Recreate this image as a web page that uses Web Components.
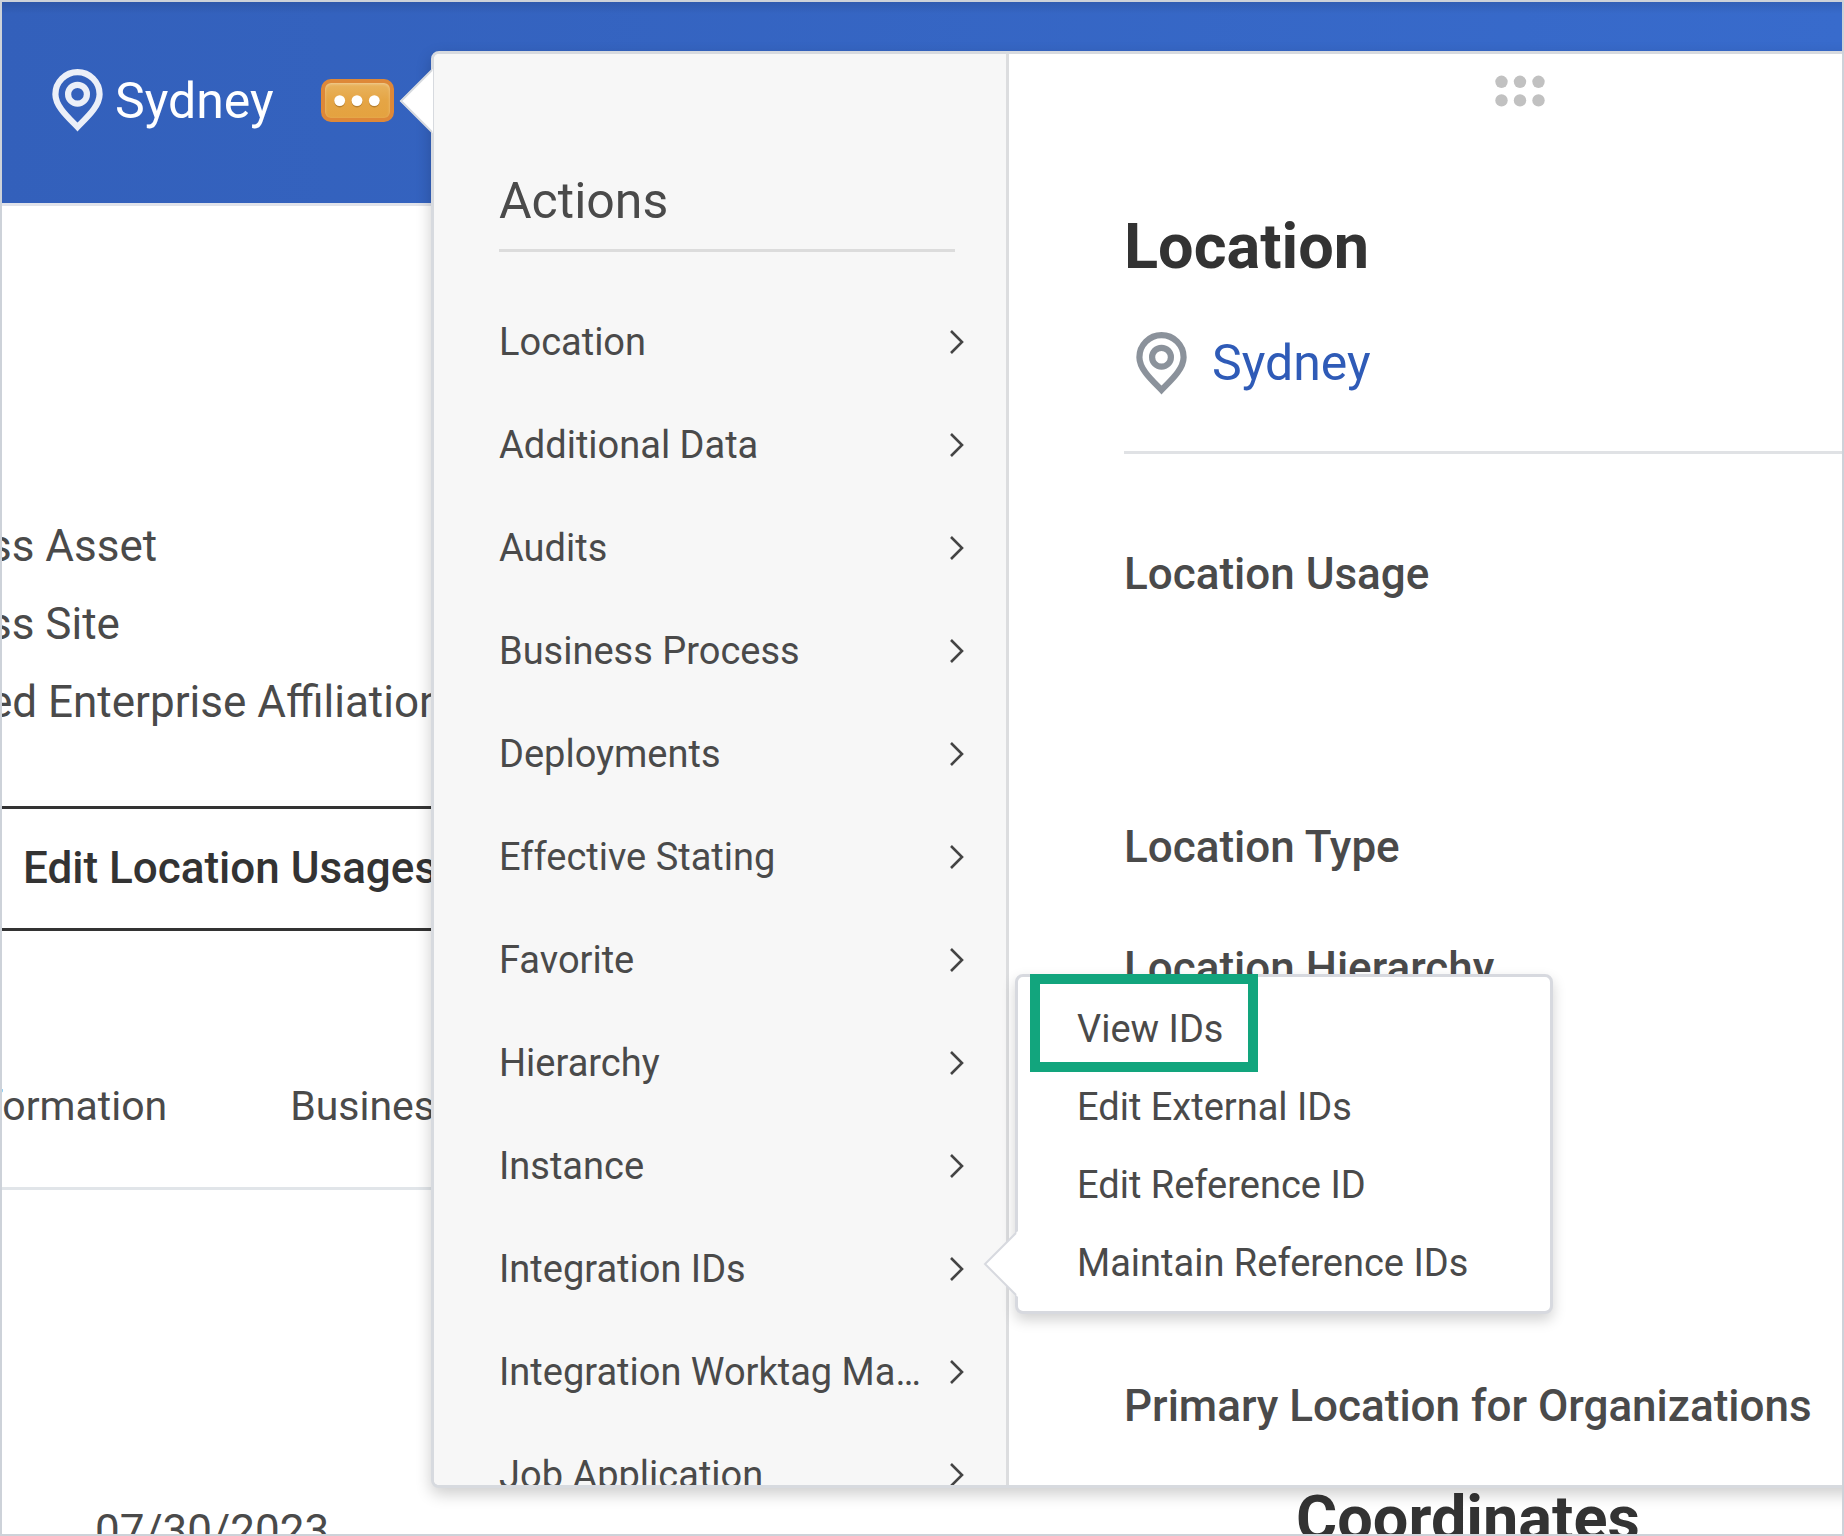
<!DOCTYPE html>
<html lang="en">
<head>
<meta charset="utf-8">
<title>Sydney - Location</title>
<style>
  html, body { margin: 0; height: 100%; }
  body { font-family: Roboto, "Liberation Sans", sans-serif; color: #4a4a4a; background: #fff; }
</style>
</head>
<body>
<app-frame>
  <page-header slot="header" name="Sydney"></page-header>
  <page-body slot="body"></page-body>
  <related-panel slot="overlay">
    <actions-menu slot="menu"></actions-menu>
    <location-card slot="card"></location-card>
  </related-panel>
  <sub-menu slot="overlay">
    <sub-item marked>View IDs</sub-item>
    <sub-item>Edit External IDs</sub-item>
    <sub-item>Edit Reference ID</sub-item>
    <sub-item>Maintain Reference IDs</sub-item>
  </sub-menu>
</app-frame>
<script>
const define = (name, html) => customElements.define(name, class extends HTMLElement {
  constructor() {
    super();
    this.attachShadow({ mode: 'open' }).innerHTML =
      '<style>*{box-sizing:border-box}button{font:inherit;color:inherit;background:none;border:0;padding:0;margin:0;text-align:left;cursor:pointer}ul{list-style:none;margin:0;padding:0}h1,h2,p{margin:0}svg{display:block}</style>' +
      (typeof html === 'function' ? html(this) : html);
  }
});

define('pin-icon', `
<style>:host{display:block;flex:none}</style>
<svg width="51" height="63" viewBox="0 0 51 63" fill="none" stroke="currentColor" stroke-width="6.2" aria-hidden="true">
  <path d="M25.5 58C18 50 3.4 38 3.4 25.2A22.1 22.1 0 0 1 47.6 25.2C47.6 38 33 50 25.5 58Z"/>
  <circle cx="25.5" cy="25.2" r="9.4"/>
</svg>`);

define('app-frame', `
<style>
:host{display:block;position:relative;box-sizing:border-box;height:100vh;overflow:hidden;border:2px solid #cdd2d9}
</style>
<slot name="header"></slot><slot name="body"></slot><slot name="overlay"></slot>`);

define('page-header', el => `
<style>
:host{display:flex;align-items:center;box-sizing:border-box;height:204px;padding:0 50px 4px;color:#fff;
  border-bottom:3px solid #e1e3ea;
  background:linear-gradient(rgba(0,0,0,.1),transparent 12px),linear-gradient(90deg,#3360bb,#386bcc)}
pin-icon{color:#ebeff8}
h1{font-size:50px;line-height:60px;font-weight:400;margin:0 47px 0 12px}
button{display:grid;place-items:center;width:73px;height:43px;border:4px solid #de8838;border-radius:10px;
  background:linear-gradient(#e9b45f,#e5a545 50%,#e4a23f);box-shadow:inset 0 1px 3px rgba(255,255,255,.35)}
</style>
<pin-icon></pin-icon>
<h1>${el.getAttribute('name')}</h1>
<button aria-label="Related Actions">
  <svg width="48" height="16" viewBox="0 0 48 16">
    <g fill="#b8802f"><circle cx="6.7" cy="9" r="5.4"/><circle cx="24" cy="9" r="5.4"/><circle cx="41.3" cy="9" r="5.4"/></g>
    <g fill="#fff"><circle cx="6.7" cy="7.6" r="5.4"/><circle cx="24" cy="7.6" r="5.4"/><circle cx="41.3" cy="7.6" r="5.4"/></g>
  </svg>
</button>`);

define('page-body', `
<style>
:host{display:block;white-space:nowrap}
.usages{margin:301px 0 65px -13px;font-size:44px;line-height:78px}
.edit{display:block;width:100%;height:125px;padding:0 0 2px 21px;border:solid #333;border-width:3px 0;
  font-size:44px;font-weight:500;color:#333}
nav{display:flex;gap:123px;margin:151px 0 293px;padding:0 0 57px;border-bottom:3px solid #e1e5e9;font-size:41px;line-height:48px}
nav button:first-child{margin-left:-14px}
.row{display:grid;grid-template-columns:11fr 5fr;align-items:end;padding-left:93px}
.row p{font-size:44px;line-height:48px}
h2{font-size:63px;line-height:72px;font-weight:700;color:#333}
</style>
<ul class="usages"><li>ss Asset</li><li>ss Site</li><li>ed Enterprise Affiliation</li></ul>
<button class="edit">Edit Location Usages</button>
<nav><button>formation</button><button>Business</button></nav>
<div class="row"><p>07/30/2023</p><h2>Coordinates</h2></div>`);

define('related-panel', `
<style>
:host{display:block;position:absolute;left:429px;top:49px;right:-192px;bottom:46px}
.box{display:grid;grid-template-columns:575px 1fr;box-sizing:border-box;height:100%;overflow:hidden;background:#fff;
  border:3px solid #d7dadf;border-radius:8px;box-shadow:0 6px 16px rgba(0,0,0,.2)}
svg{position:absolute;left:-32px;top:18px}
</style>
<div class="box"><slot name="menu"></slot><slot name="card"></slot></div>
<svg width="34" height="64" viewBox="0 0 34 64"><path d="M34 0V64L1 32Z" fill="#fff"/><path d="M33 1L2 32L33 63" fill="none" stroke="#d7dadf" stroke-width="2"/></svg>`);

define('menu-row', `
<style>
:host{display:block}
button{display:flex;align-items:center;justify-content:space-between;width:100%;height:103px;font-size:38px;line-height:48px}
span{white-space:nowrap;overflow:hidden}
svg{flex:none}
</style>
<button><span><slot></slot></span>
<svg width="15" height="26" viewBox="0 0 15 26" fill="none" stroke="#444" stroke-width="2.6"><path d="M2 2L13 13L2 24"/></svg></button>`);

const actions = ['Location', 'Additional Data', 'Audits', 'Business Process', 'Deployments', 'Effective Stating',
  'Favorite', 'Hierarchy', 'Instance', 'Integration IDs', 'Integration Worktag Ma…', 'Job Application'];

define('actions-menu', `
<style>
:host{display:block;box-sizing:border-box;min-height:0;padding:117px 42px 0 65px;background:#f7f7f7;border-right:3px solid #dcdddf}
h2{font-size:50px;line-height:60px;font-weight:400;margin:0 9px 38px 0;padding-bottom:18px;border-bottom:3px solid #dcdcdc}
</style>
<h2>Actions</h2>
<nav>${actions.map(a => `<menu-row>${a}</menu-row>`).join('')}</nav>`);

define('location-card', `
<style>
:host{display:block;min-height:0;padding-top:21px;white-space:nowrap}
.grip{margin:0 auto 104px}
.content{padding-left:115px}
h2{font-size:63px;line-height:72px;font-weight:700;color:#333}
.who{display:flex;align-items:center;gap:25px;margin-top:48px;padding:0 0 56px 12px;border-bottom:3px solid #e0e2e5}
pin-icon{color:#8b929b}
a{font-size:50px;line-height:64px;color:#2f5bb7;text-decoration:none}
.fields{font-size:44px;line-height:50px;font-weight:500}
.fields p{margin-top:71px}
.fields p:first-child{margin-top:95px;padding-bottom:152px}
.fields p:last-child{margin-top:388px}
</style>
<svg class="grip" width="50" height="32" viewBox="0 0 50 32" fill="#c1c1c1">
  <circle cx="6.5" cy="6.8" r="6.2"/><circle cx="25" cy="6.8" r="6.2"/><circle cx="43.5" cy="6.8" r="6.2"/>
  <circle cx="6.5" cy="25.4" r="6.2"/><circle cx="25" cy="25.4" r="6.2"/><circle cx="43.5" cy="25.4" r="6.2"/>
</svg>
<div class="content">
<h2>Location</h2>
<div class="who"><pin-icon></pin-icon><a href="#sydney">Sydney</a></div>
<div class="fields"><p>Location Usage</p><p>Location Type</p><p>Location Hierarchy</p><p>Primary Location for Organizations</p></div>
</div>`);

define('sub-menu', `
<style>
:host{display:block;position:absolute;left:1013px;top:972px;width:538px;box-sizing:border-box;padding:13px 0 9px 59px;
  background:#fff;border:3px solid #d7d9df;border-radius:8px;box-shadow:0 6px 14px rgba(0,0,0,.18)}
svg{position:absolute;left:-35px;top:254px}
</style>
<svg width="35" height="66" viewBox="0 0 35 66"><path d="M35 0V66L1 33Z" fill="#fff"/><path d="M33 2L2 33L33 64" fill="none" stroke="#d7d9df" stroke-width="2"/></svg>
<slot></slot>`);

define('sub-item', `
<style>
:host{display:block;position:relative;font-size:38px;line-height:78px}
:host([marked])::after{content:"";position:absolute;left:-47px;top:-16px;width:228px;height:98px;box-sizing:border-box;
  border:10px solid #12a57d;pointer-events:none}
button{line-height:78px;white-space:nowrap;display:block}
</style>
<button><slot></slot></button>`);
</script>
</body>
</html>
